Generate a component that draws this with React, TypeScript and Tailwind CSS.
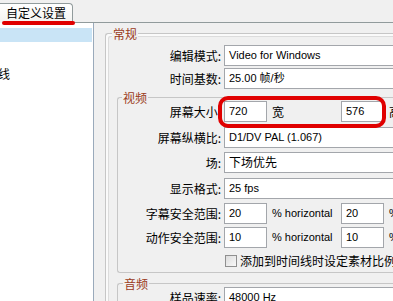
import type { ReactNode } from 'react';

const latin = "font-['Liberation_Sans','Noto_Sans_CJK_SC',sans-serif]";

function Box({ w, children }: { w: string; children?: ReactNode }) {
  return (
    <div
      className={`${w} h-[21px] shrink-0 border border-[#a3a6ab] bg-white pl-[4px] flex items-center text-[11px] whitespace-nowrap overflow-hidden ${latin}`}
    >
      {children}
    </div>
  );
}

function Row({ labelW, label, children, mt }: { labelW: string; label: string; children: ReactNode; mt: string }) {
  return (
    <div className={`flex items-center h-[21px] ${mt}`}>
      <div className={`${labelW} shrink-0 text-right pr-[3px] text-[12px] leading-[21px] whitespace-nowrap`}>{label}</div>
      {children}
    </div>
  );
}

export default function App() {
  return (
    <div className="relative w-[393px] h-[301px] overflow-hidden bg-[#f0f0f0] text-black font-['Noto_Sans_CJK_SC',sans-serif]">
      {/* 标签页 */}
      <div className="flex h-[23px] items-end">
        <div className="ml-[-1px] h-[20px] w-[74px] shrink-0 border border-b-0 border-[#919b9c] rounded-tr-[4px] bg-gradient-to-b from-white to-[#f3f3f0] pl-[6px] text-[12px] leading-[18px]">
          自定义设置
        </div>
        <div className="flex-1 h-full border-b border-[#919b9c]" />
      </div>
      <div className="absolute top-[21px] left-[2px] w-[73px] h-[4px] rounded-full bg-[#e00000]" />

      <div className="flex h-[278px]">
        {/* 左侧列表 */}
        <div className="w-[94px] h-full shrink-0 bg-white border-r border-[#9aaabb] pt-[5px] overflow-hidden">
          <div className="h-[14px] mr-[1px] bg-[#c9e4f6]" />
          <div className="mt-[24px] ml-[-26px] text-[12px] leading-[16px] whitespace-nowrap">时间线</div>
        </div>

        {/* 右侧设置 */}
        <div className="flex-1 pl-[11px] pt-[10px]">
          <div className="relative h-full border-l border-t border-[#c6c6c6] rounded-tl-[3px] shadow-[inset_2px_2px_0_#fafafa,inset_3px_3px_0_#dcdcdc]">
            <div className="absolute -top-[7px] left-[6px] px-[1px] bg-[#f0f0f0] text-[12px] leading-[13px] text-[#9a3a1a]">常规</div>

            <Row labelW="w-[118px]" label="编辑模式:" mt="mt-[11px]">
              <Box w="w-[200px]">Video for Windows</Box>
            </Row>
            <Row labelW="w-[118px]" label="时间基数:" mt="mt-[2px]">
              <Box w="w-[200px]">25.00 帧/秒</Box>
            </Row>

            {/* 视频 */}
            <div className="relative ml-[11px] mt-[8px] border border-r-0 border-[#c6c6c6] rounded-l-[3px] pb-[5px]">
              <div className="absolute -top-[6px] left-[4px] px-[1px] bg-[#f0f0f0] text-[12px] leading-[12px] text-[#9a3a1a]">视频</div>

              <Row labelW="w-[106px]" label="屏幕大小:" mt="mt-[3px]">
                <Box w="w-[43px]">720</Box>
                <span className="ml-[5px] w-[69px] shrink-0 text-[12px]">宽</span>
                <Box w="w-[43px]">576</Box>
                <span className="ml-[5px] shrink-0 text-[12px]">高</span>
              </Row>
              <Row labelW="w-[106px]" label="屏幕纵横比:" mt="mt-[5px]">
                <Box w="w-[200px]">D1/DV PAL (1.067)</Box>
              </Row>
              <Row labelW="w-[106px]" label="场:" mt="mt-[4px]">
                <Box w="w-[200px]">
                  <span className="text-[12px]">下场优先</span>
                </Box>
              </Row>
              <Row labelW="w-[106px]" label="显示格式:" mt="mt-[5px]">
                <Box w="w-[200px]">25 fps</Box>
              </Row>
              <Row labelW="w-[106px]" label="字幕安全范围:" mt="mt-[4px]">
                <Box w="w-[43px]">20</Box>
                <span className={`ml-[5px] w-[69px] shrink-0 text-[11px] ${latin}`}>% horizontal</span>
                <Box w="w-[43px]">20</Box>
                <span className={`ml-[5px] shrink-0 text-[11px] ${latin}`}>% vertical</span>
              </Row>
              <Row labelW="w-[106px]" label="动作安全范围:" mt="mt-[3px]">
                <Box w="w-[43px]">10</Box>
                <span className={`ml-[5px] w-[69px] shrink-0 text-[11px] ${latin}`}>% horizontal</span>
                <Box w="w-[43px]">10</Box>
                <span className={`ml-[5px] shrink-0 text-[11px] ${latin}`}>% vertical</span>
              </Row>
              <div className="mt-[7px] ml-[107px] flex items-center h-[12px]">
                <div className="w-[12px] h-[12px] shrink-0 border border-[#8f8f8f] bg-gradient-to-br from-[#dcdcdc] to-[#f8f8f8]" />
                <span className="ml-[3px] text-[12px] leading-[12px] whitespace-nowrap">添加到时间线时设定素材比例</span>
              </div>
            </div>

            {/* 音频 */}
            <div className="relative ml-[11px] mt-[10px] border-l border-t border-[#c6c6c6] rounded-tl-[3px]">
              <div className="absolute -top-[6px] left-[5px] px-[1px] bg-[#f0f0f0] text-[12px] leading-[12px] text-[#9a3a1a]">音频</div>
              <Row labelW="w-[106px]" label="样品速率:" mt="mt-[3px]">
                <Box w="w-[200px]">48000 Hz</Box>
              </Row>
            </div>
          </div>
        </div>
      </div>

      {/* 红色圈注 */}
      <div className="absolute left-[218px] top-[96px] w-[168px] h-[32px] border-[4px] border-[#e00000] rounded-[10px]" />
    </div>
  );
}
